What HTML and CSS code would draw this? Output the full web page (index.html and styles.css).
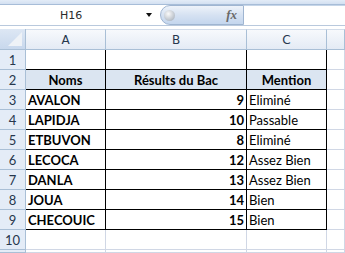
FILE: index.html
```html
<!DOCTYPE html>
<html lang="fr">
<head>
    <meta charset="UTF-8">
    <title>Résultats du Bac</title>
    <link rel="stylesheet" href="styles.css">
</head>
<body>
    <div class="top-strip"></div>
    <div class="formula-bar">
        <div class="name-box"><span>H16</span><i class="arrow"></i></div>
        <div class="fx-pill"><span class="knob"></span><span class="fx">fx</span></div>
        <div class="formula-input"></div>
    </div>

    <div class="sheet">
        <div class="corner"></div>
        <div class="ch">A</div>
        <div class="ch">B</div>
        <div class="ch">C</div>
        <div class="ch"></div>

        <div class="rh">1</div>
        <div class="cell bk"></div>
        <div class="cell bk"></div>
        <div class="cell bk"></div>
        <div class="cell"></div>

        <div class="rh">2</div>
        <div class="cell bk fill bold center">Noms</div>
        <div class="cell bk fill bold center">Résults du Bac</div>
        <div class="cell bk fill bold center">Mention</div>
        <div class="cell"></div>

        <div class="rh">3</div>
        <div class="cell bk bold">AVALON</div>
        <div class="cell bk bold right">9</div>
        <div class="cell bk">Eliminé</div>
        <div class="cell"></div>

        <div class="rh">4</div>
        <div class="cell bk bold">LAPIDJA</div>
        <div class="cell bk bold right">10</div>
        <div class="cell bk">Passable</div>
        <div class="cell"></div>

        <div class="rh">5</div>
        <div class="cell bk bold">ETBUVON</div>
        <div class="cell bk bold right">8</div>
        <div class="cell bk">Eliminé</div>
        <div class="cell"></div>

        <div class="rh">6</div>
        <div class="cell bk bold">LECOCA</div>
        <div class="cell bk bold right">12</div>
        <div class="cell bk">Assez Bien</div>
        <div class="cell"></div>

        <div class="rh">7</div>
        <div class="cell bk bold">DANLA</div>
        <div class="cell bk bold right">13</div>
        <div class="cell bk">Assez Bien</div>
        <div class="cell"></div>

        <div class="rh">8</div>
        <div class="cell bk bold">JOUA</div>
        <div class="cell bk bold right">14</div>
        <div class="cell bk">Bien</div>
        <div class="cell"></div>

        <div class="rh">9</div>
        <div class="cell bk bold">CHECOUIC</div>
        <div class="cell bk bold right">15</div>
        <div class="cell bk">Bien</div>
        <div class="cell"></div>

        <div class="rh">10</div>
        <div class="cell"></div>
        <div class="cell"></div>
        <div class="cell"></div>
        <div class="cell"></div>

        <div class="rh"></div>
        <div class="cell"></div>
        <div class="cell"></div>
        <div class="cell"></div>
        <div class="cell"></div>
    </div>
</body>
</html>
```

FILE: styles.css
```css
* { box-sizing: border-box; }
body { margin: 0; background: #fff; width: 345px; height: 253px; overflow: hidden; font-family: Lato, "Liberation Sans", sans-serif; }

/* formula bar */
.top-strip { height: 5px; background: linear-gradient(#e3ecf7, #d3e0f1); border-bottom: 1px solid #a7bdd8; }
.formula-bar { display: flex; height: 21px; border-bottom: 1px solid #b9c9dd; }
.name-box { width: 160px; display: flex; align-items: center; position: relative; font-family: "DejaVu Sans", sans-serif; font-size: 11px; color: #2b2b2b; }
.name-box span { margin-left: 60px; }
.arrow { position: absolute; left: 146px; top: 8px; border-left: 3.5px solid transparent; border-right: 3.5px solid transparent; border-top: 4px solid #111; }
.fx-pill { width: 84px; display: flex; align-items: center; justify-content: space-between; padding: 0 6px 0 3px; border: 1px solid #9fb5d1; border-radius: 10px 0 0 10px; background: linear-gradient(#eef3fa, #d6e2f2 50%, #c4d6ee); }
.knob { width: 11px; height: 11px; border-radius: 50%; background: radial-gradient(circle at 40% 35%, #fafafa, #b9c0c9 70%, #9aa4b1); }
.fx { font-family: "Liberation Serif", serif; font-style: italic; font-weight: bold; font-size: 13px; color: #6a6a6a; }
.formula-input { flex: 1; background: #fff; border-top: 1px solid #c5d5e8; }

/* grid */
.sheet { display: grid; grid-template-columns: 26px 80px 141px 80px 1fr; grid-template-rows: 21px repeat(10, 20px) 3px; margin-top: 3px; overflow: hidden; }
.corner, .ch, .rh { border-right: 1px solid #a9bfd6; border-bottom: 1px solid #a9bfd6; color: #27374d; font-size: 13px; display: flex; align-items: center; justify-content: center; }
.corner { position: relative; background: linear-gradient(#dde7f4, #c8d8ed); }
.corner::after { content: ""; position: absolute; right: 3px; bottom: 3px; width: 14px; height: 14px; background: #eef2f7; clip-path: polygon(100% 0, 100% 100%, 0 100%); }
.ch { background: linear-gradient(#f7f9fc, #e4ebf5); font-family: "DejaVu Sans", sans-serif; font-size: 12px; border-top: 1px solid #d2dcea; }
.rh { background: #e4ecf7; }
.cell { border-right: 1px solid #d0d7e5; border-bottom: 1px solid #d0d7e5; font-size: 13px; color: #000; padding: 0 2px; display: flex; align-items: center; white-space: nowrap; }
.cell.bk { border-right-color: #000; border-bottom-color: #000; }
.fill { background: #dbe5f1; }
.bold { font-weight: bold; }
.center { justify-content: center; }
.right { justify-content: flex-end; }
```
